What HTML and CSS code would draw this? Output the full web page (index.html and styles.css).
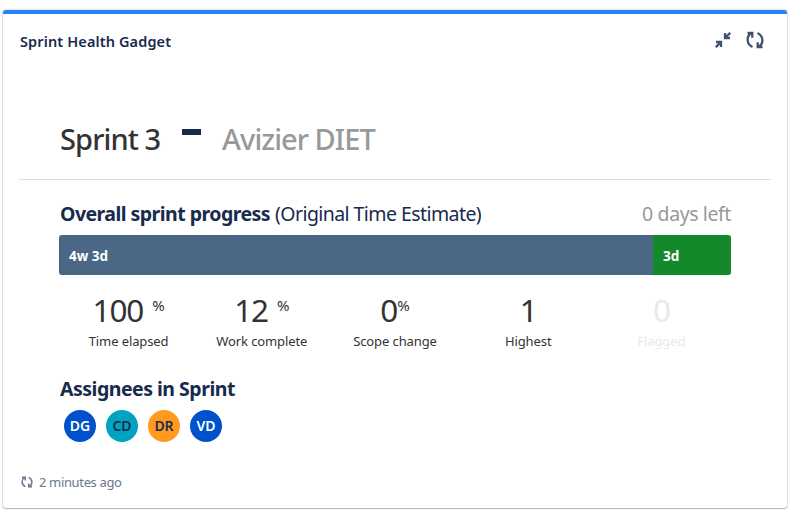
FILE: index.html
```html
<!DOCTYPE html>
<html lang="en">
<head>
<meta charset="utf-8">
<title>Sprint Health Gadget</title>
<link rel="stylesheet" href="styles.css">
</head>
<body>
<main class="gadget">
  <header class="bar">
    <h1 class="title">Sprint Health Gadget</h1>
    <div class="actions">
      <svg class="shrink" viewBox="0 0 16 16" width="16" height="16"><path d="M15.2.8 10.2 5.8M10 1V6h5M.8 15.2 5.8 10.2M1 10H6v5"/></svg>
      <svg class="refresh" viewBox="0 0 18 18" width="18" height="18"><path d="M6.500 16C.2 13 .4 5.500 4.800 2.500M1.500 2H6.300V6.800M11.500 2c6.300 3 6.100 10.500 1.700 13.500M16.500 16H11.700V11.200"/></svg>
    </div>
  </header>
  <section class="heading">
    <span class="sprint">Sprint 3</span><span class="dash"></span><span class="board">Avizier DIET</span>
  </section>
  <section class="content">
    <div class="row">
      <h2 class="overall">Overall sprint progress</h2><span class="estimate">(Original Time Estimate)</span><span class="left">0 days left</span>
    </div>
    <div class="progress"><div class="done">4w 3d</div><div class="complete">3d</div></div>
    <div class="stats">
      <div class="stat"><div class="value"><span class="num">100</span><span class="pct gap">%</span></div><div class="label">Time elapsed</div></div>
      <div class="stat"><div class="value"><span class="num">12</span><span class="pct gap">%</span></div><div class="label">Work complete</div></div>
      <div class="stat"><div class="value"><span class="num">0</span><span class="pct">%</span></div><div class="label">Scope change</div></div>
      <div class="stat"><div class="value"><span class="num">1</span></div><div class="label">Highest</div></div>
      <div class="stat muted"><div class="value"><span class="num">0</span></div><div class="label">Flagged</div></div>
    </div>
    <h2 class="assignees">Assignees in Sprint</h2>
    <div class="avatars"><span class="avatar">DG</span><span class="avatar teal">CD</span><span class="avatar orange">DR</span><span class="avatar">VD</span></div>
  </section>
  <footer class="footer">
    <svg class="refresh" viewBox="0 0 18 18" width="12" height="12"><path d="M6.500 16C.2 13 .4 5.500 4.800 2.500M1.500 2H6.300V6.800M11.500 2c6.300 3 6.100 10.500 1.700 13.500M16.500 16H11.700V11.200"/></svg>
    <span>2 minutes ago</span>
  </footer>
</main>
</body>
</html>
```
FILE: styles.css
```css
* { box-sizing: border-box; }
body { margin: 0; min-height: 514px; display: flow-root; background: #fff; font-family: "Noto Sans", sans-serif; color: #172b4d; }
h1, h2 { margin: 0; }
span, h1, h2 { white-space: nowrap; }
svg { fill: none; display: block; }
.gadget {
  margin: 10px 0 0 3px; width: 784px; height: 498px; background: #fff;
  border-top: 4px solid #2684ff; border-radius: 3px;
  box-shadow: 0 1px 1px rgba(9,30,66,.25), 0 0 1px 1px rgba(9,30,66,.13);
}
.bar { height: 54px; padding: 0 23px 0 17px; display: flex; justify-content: space-between; align-items: center; }
.title { font-size: 14.500px; line-height: 20px; font-weight: 600; letter-spacing: .12px; }
.actions { display: flex; gap: 15px; align-items: center; color: #42526e; margin-top: -2px; }
.actions svg { stroke: #42526e; stroke-width: 2.300; }
.heading { margin: 0 16px; height: 112px; padding: 51px 0 0 41px; border-bottom: 1px solid #ddd; display: flex; line-height: 40px; font-size: 29px; }
.sprint { width: 121px; color: #333; font-weight: 500; letter-spacing: -.9px; }
.dash { width: 19px; height: 6px; margin: 10px 21px 0 1px; background: #172b4d; }
.board { color: #999; font-weight: 500; letter-spacing: -.95px; }
.content { padding: 20px 56px 0; }
.row { display: flex; height: 35px; line-height: 28px; font-size: 19.500px; }
.overall { width: 216px; font-size: 19.500px; font-weight: 700; letter-spacing: -.54px; padding-left: 1px; }
.estimate { letter-spacing: -.57px; }
.left { margin-left: auto; color: #999; letter-spacing: -.4px; }
.progress { display: flex; height: 40px; border-radius: 3px; overflow: hidden; color: #fff; font-size: 13.500px; font-weight: 700; line-height: 42px; }
.done { width: 594px; padding-left: 10px; background: #4a6785; }
.complete { flex: 1; padding-left: 10px; background: #14892c; }
.stats { display: grid; grid-template-columns: repeat(5, 1fr); margin: 15px 3px 0; height: 86px; color: #333; }
.stat { text-align: center; }
.value { display: flex; justify-content: center; height: 40px; line-height: 40px; }
.num { font-size: 31.500px; letter-spacing: -1.1px; font-weight: 400; }
.pct { font-size: 15px; line-height: 31px; font-weight: 400; }
.gap { margin-left: 9px; }
.label { font-size: 13px; line-height: 22px; white-space: nowrap; letter-spacing: -.1px; }
.muted { color: #e9e9e9; }
.assignees { font-size: 19.500px; line-height: 26px; margin-bottom: 8px; letter-spacing: -.5px; padding-left: 1px; }
.avatars { display: flex; gap: 10px; margin: 0 0 0 5px; }
.avatar { width: 32px; height: 32px; border-radius: 50%; background: #0052cc; color: #fff; text-align: center; line-height: 32px; font-size: 14px; font-weight: 600; }
.teal { background: #00a3bf; color: #172b4d; }
.orange { background: #ff991f; color: #172b4d; }
.footer { display: flex; align-items: center; gap: 6px; margin: 30px 0 0 18px; height: 20px; color: #6b778c; font-size: 13px; letter-spacing: -.35px; }
.footer svg { stroke: #6b778c; stroke-width: 2.300; }
```
